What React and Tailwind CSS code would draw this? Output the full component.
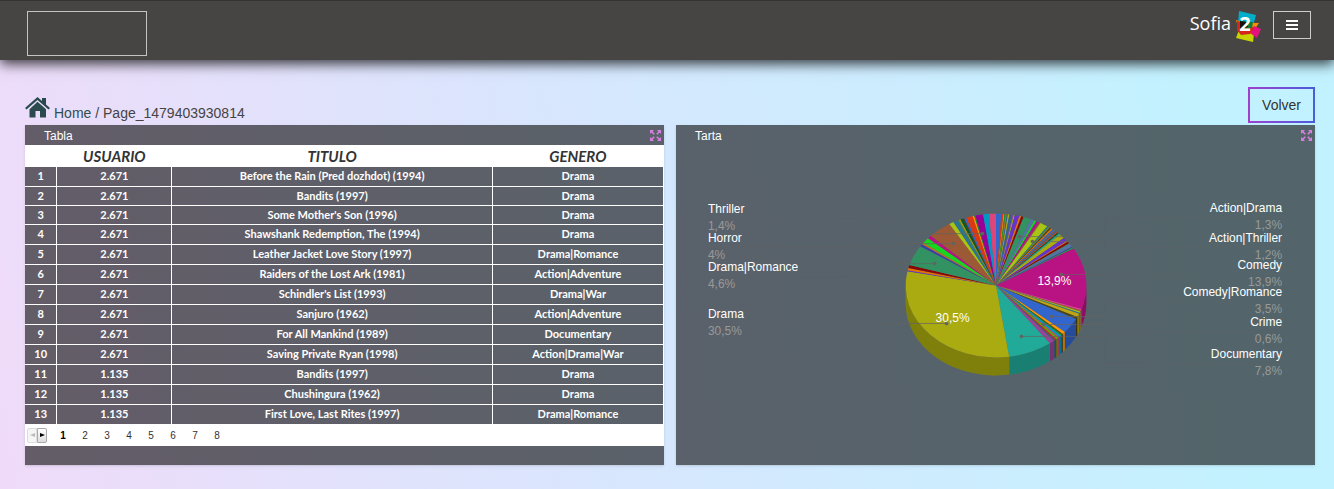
import React from "react";

const ROWS = [
  ["2.671", "Before the Rain (Pred dozhdot) (1994)", "Drama"],
  ["2.671", "Bandits (1997)", "Drama"],
  ["2.671", "Some Mother's Son (1996)", "Drama"],
  ["2.671", "Shawshank Redemption, The (1994)", "Drama"],
  ["2.671", "Leather Jacket Love Story (1997)", "Drama|Romance"],
  ["2.671", "Raiders of the Lost Ark (1981)", "Action|Adventure"],
  ["2.671", "Schindler's List (1993)", "Drama|War"],
  ["2.671", "Sanjuro (1962)", "Action|Adventure"],
  ["2.671", "For All Mankind (1989)", "Documentary"],
  ["2.671", "Saving Private Ryan (1998)", "Action|Drama|War"],
  ["1.135", "Bandits (1997)", "Drama"],
  ["1.135", "Chushingura (1962)", "Drama"],
  ["1.135", "First Love, Last Rites (1997)", "Drama|Romance"],
];

// [end angle in degrees clockwise from the top, colour]
const SLICES = [
  [3.4, "#3366cc"], [4.8, "#dc3912"], [5.4, "#ff9900"], [6.2, "#109618"],
  [6.9, "#b77322"], [7.6, "#316395"], [8.6, "#aaaa11"], [10.6, "#316395"],
  [11.3, "#994499"], [12, "#aaaa11"], [15, "#6633cc"], [16.2, "#e67300"],
  [17.8, "#8b0707"], [22.8, "#329262"], [25.2, "#5574a6"], [26.6, "#16d620"],
  [26.9, "#3b3eac"], [28.8, "#b91383"], [29.5, "#9c5935"], [34.6, "#a9c413"],
  [35.6, "#2a778d"], [36.6, "#668d1c"], [37.6, "#5a3a10"], [38.7, "#e67300"],
  [39.9, "#3366cc"], [40.8, "#9c5935"], [41.8, "#316395"], [42.8, "#dc3912"],
  [43.8, "#0c5922"], [45, "#22aa99"], [48.6, "#aaaa11"], [51.6, "#6633cc"],
  [52.4, "#e67300"], [54, "#8b0707"], [54.6, "#329262"], [57.4, "#5574a6"],
  [58.1, "#3b3eac"], [59, "#16a040"], [109, "#b91383"], [110.2, "#f4359e"],
  [111.2, "#9c5935"], [112.2, "#a9c413"], [113.1, "#2a778d"], [116, "#bea413"],
  [117.8, "#4a4518"], [130.4, "#3366cc"], [132.3, "#ff9900"], [133.2, "#5a4a20"],
  [134, "#109618"], [135.8, "#0099c6"], [136.6, "#dd4477"], [138.2, "#66aa00"],
  [139.5, "#b82e2e"], [140.4, "#316395"], [143.5, "#994499"], [171.6, "#22aa99"],
  [281.4, "#aaaa11"], [282.3, "#6633cc"], [284.2, "#e67300"], [286.6, "#8b0707"],
  [303.2, "#329262"], [305, "#3b3eac"], [306.6, "#b77322"], [311.2, "#16d620"],
  [313.9, "#b91383"], [328.9, "#9c5935"], [331.9, "#a9c413"], [335.2, "#2a778d"],
  [336, "#668d1c"], [336.8, "#bea413"], [338.8, "#0c5922"], [339.5, "#743411"],
  [340.8, "#3366cc"], [345, "#dc3912"], [346, "#ff9900"], [346.8, "#109618"],
  [351.8, "#990099"], [355.5, "#0099c6"], [360, "#dd4477"],
];

const CX = 320.5, CY = 140.5, RX = 90.5, RY = 72, DEPTH = 18;

function rim(deg, dy = 0) {
  const a = (deg * Math.PI) / 180;
  return `${(CX + RX * Math.sin(a)).toFixed(2)} ${(CY + dy - RY * Math.cos(a)).toFixed(2)}`;
}

const WEDGES = SLICES.map(([end, color], i) => ({
  start: i === 0 ? 0 : SLICES[i - 1][0],
  end,
  color,
}));

const LABELS = [
  ["Thriller", "1,4%", 32, 68, "start"],
  ["Horror", "4%", 32, 97, "start"],
  ["Drama|Romance", "4,6%", 32, 126, "start"],
  ["Drama", "30,5%", 32, 173, "start"],
  ["Action|Drama", "1,3%", 607, 67, "end"],
  ["Action|Thriller", "1,2%", 607, 97, "end"],
  ["Comedy", "13,9%", 607, 124, "end"],
  ["Comedy|Romance", "3,5%", 607, 151, "end"],
  ["Crime", "0,6%", 607, 181, "end"],
  ["Documentary", "7,8%", 607, 213, "end"],
];

// [label edge x, label line y, dot x, dot y]
const LEADERS = [
  [32, 73, 307, 88],
  [32, 102, 278, 98],
  [32, 131, 259, 118],
  [32, 178, 271, 178],
  [607, 72, 344, 91],
  [607, 102, 357, 96],
  [607, 129, 386, 129],
  [607, 156, 376, 171],
  [607, 186, 368, 179],
  [607, 218, 346, 191],
];

function PieChart() {
  return (
    <svg
      viewBox="0 0 640 320"
      className="block h-80 w-full font-['Liberation_Sans',Arial,sans-serif] text-xs"
      role="img"
      aria-label="Tarta"
    >
      {WEDGES.filter((w) => w.end > 90 && w.start < 270).map((w) => {
        const s = Math.max(w.start, 90);
        const e = Math.min(w.end, 270);
        const d = `M${rim(s)}A${RX} ${RY} 0 0 1 ${rim(e)}L${rim(e, DEPTH)}A${RX} ${RY} 0 0 0 ${rim(s, DEPTH)}Z`;
        return (
          <g key={w.start}>
            <path d={d} fill={w.color} />
            <path d={d} fill="#000" fillOpacity="0.25" />
          </g>
        );
      })}
      {WEDGES.map((w) => (
        <path
          key={w.start}
          d={`M${CX} ${CY}L${rim(w.start)}A${RX} ${RY} 0 0 1 ${rim(w.end)}Z`}
          fill={w.color}
        />
      ))}
      <g fill="none" stroke="#636363">
        {LEADERS.map(([x, y, dx, dy]) => {
          const bend = x < CX ? 220 : 430;
          return (
            <g key={`${x}-${y}`}>
              <path d={`M${x} ${y + 0.5}H${bend}`} strokeOpacity="0.35" />
              <path d={`M${bend} ${y + 0.5}V${dy + 0.5}`} strokeOpacity="0.2" />
              <path d={`M${bend} ${dy + 0.5}H${dx}`} strokeOpacity="0.7" />
              <circle cx={dx} cy={dy + 0.5} r="1.5" fill="#636363" strokeOpacity="0.7" />
            </g>
          );
        })}
      </g>
      <g fill="#fff">
        <text x="260" y="177">30,5%</text>
        <text x="362" y="140">13,9%</text>
      </g>
      {LABELS.map(([name, pct, x, y, anchor]) => (
        <g key={name} textAnchor={anchor}>
          <text x={x} y={y} fill="#fff">{name}</text>
          <text x={x} y={y + 17} fill="#999">{pct}</text>
        </g>
      ))}
    </svg>
  );
}

function ExpandIcon() {
  return (
    <svg viewBox="0 0 11 11" className="size-[11px]" fill="#da7fe0" stroke="#da7fe0" aria-hidden="true">
      <path stroke="none" d="M0 0h4L0 4zM11 0v4L7 0zM0 11V7l4 4zM11 11H7l4-4z" />
      <path strokeWidth="1.6" d="M1.5 1.5L4.2 4.2M9.5 1.5L6.8 4.2M1.5 9.5L4.2 6.800M9.5 9.5L6.8 6.8" />
    </svg>
  );
}

function Panel({ title, children }) {
  return (
    <section className="h-[340px] min-w-0 flex-1 bg-[#0e0e0e]/62 shadow-sm">
      <div className="flex h-5 items-center justify-between pr-[3px] pl-[19px]">
        <h2 className="pt-px text-xs text-white">{title}</h2>
        <button type="button" aria-label={`Ampliar ${title}`}>
          <ExpandIcon />
        </button>
      </div>
      {children}
    </section>
  );
}

function MovieTable() {
  return (
    <>
      <table className="w-full table-fixed border-collapse text-center font-[Lato,'Noto_Sans',sans-serif] text-[11px] leading-3 font-bold text-white">
        <colgroup>
          <col className="w-[5%]" />
          <col className="w-[18%]" />
          <col className="w-[50.2%]" />
          <col className="w-[26.8%]" />
        </colgroup>
        <thead className="bg-white text-[15px] leading-4 text-[#333] italic">
          <tr className="h-[22px]">
            <th aria-label="Fila" />
            <th className="p-0">USUARIO</th>
            <th className="p-0">TITULO</th>
            <th className="p-0">GENERO</th>
          </tr>
        </thead>
        <tbody>
          {ROWS.map((row, i) => (
            <tr key={i} className={i < 3 ? "h-[19px]" : "h-5"}>
              {[i + 1, ...row].map((cell, j) => (
                <td key={j} className="border-r border-b border-white p-0">{cell}</td>
              ))}
            </tr>
          ))}
        </tbody>
      </table>
      <nav aria-label="Paginación" className="flex h-[21px] items-center bg-white pl-[2px] text-[10px] text-[#333]">
        <button type="button" disabled aria-label="Anterior" className="flex h-[15px] w-[10px] items-center justify-center rounded-l-xs border border-[#ddd] bg-[#f5f5f5]">
          <svg viewBox="0 0 5 4" className="h-1 w-[5px]" fill="#bbb"><path d="M5 0v4L0 2z" /></svg>
        </button>
        <button type="button" aria-label="Siguiente" className="flex h-[15px] w-[10px] items-center justify-center rounded-r-xs border border-[#aaa] bg-linear-to-b from-white to-[#ddd]">
          <svg viewBox="0 0 5 4" className="h-1 w-[5px]" fill="#000"><path d="M0 0v4l5-2z" /></svg>
        </button>
        <div className="flex pl-[5px]">
          {[1, 2, 3, 4, 5, 6, 7, 8].map((n) => (
            <a key={n} href={`#${n}`} className={n === 1 ? "w-[22px] text-center font-bold text-black" : "w-[22px] text-center"}>{n}</a>
          ))}
        </div>
      </nav>
    </>
  );
}

function Logo() {
  return (
    <div className="flex items-start">
      <span className="font-['Open_Sans','Noto_Sans',sans-serif] text-lg leading-6 text-white">Sofia</span>
      <svg viewBox="0 0 26 32" className="ml-1 h-8 w-[26px]" aria-label="2">
        <path fill="#00aecb" d="M4 0l17 4-3 11L3 13z" />
        <path fill="#c8d400" d="M4 19l13 3 2 1-1 8-17-4z" />
        <path fill="#f39200" d="M1 9l10 3 13 0-7 10-12 1z" />
        <path fill="#e5127d" d="M19 15l7 3-4 9-7-5z" />
        <path fill="#d4261c" d="M2 10l9 2 8 5-4 6-9 1-4-5z" />
        <path fill="#107a38" d="M5 10l13 1-1 6-9 1z" />
        <path fill="#1c0f08" d="M5 10l6 1 2 5-8 2z" />
        <text x="10" y="20" textAnchor="middle" fill="#fff" className="font-['Noto_Sans','Open_Sans',sans-serif] text-xl font-bold">2</text>
      </svg>
    </div>
  );
}

export default function App() {
  return (
    <div className="min-h-screen bg-linear-80 from-[#efdbf9] via-[#d4e8fe] to-[#c2f2ff] to-90% font-['Liberation_Sans',Arial,sans-serif]">
      <header className="flex h-[60px] items-start justify-between border-t border-[#333] bg-[#474543] pt-[10px] pr-[23px] pl-[27px] shadow-[0_4px_12px_rgba(0,0,0,0.75)]">
        <div className="h-[45px] w-[120px] border border-[#c4c4c4]" />
        <div className="flex items-start gap-3">
          <Logo />
          <button type="button" aria-label="Menú" className="flex h-7 w-[38px] flex-col items-center justify-center gap-[2px] border border-[#ccc]">
            <span className="h-[2px] w-3 bg-white" />
            <span className="h-[2px] w-3 bg-white" />
            <span className="h-[2px] w-3 bg-white" />
          </button>
        </div>
      </header>
      <main className="pt-[27px] pr-[19px] pb-6 pl-[25px]">
        <div className="flex h-[38px] items-start justify-between">
          <nav aria-label="Ruta" className="flex items-end pt-[10px] text-sm leading-4 text-[#444]">
            <a href="#home" className="flex items-end gap-1 text-[#2f4f4f]">
              <svg viewBox="0 0 25 21" className="mb-[3px] h-[21px] w-[25px]" fill="#2a4a4d" aria-hidden="true">
                <path d="M12.5 0L17 4V1h4v6.400l4 3.600-1.500 1.600L12.500 2.900 1.500 12.600 0 11z" />
                <path d="M12.500 4.800L21 12.300V20.500H15V14h-4.500v6.500H4.500V12.300z" />
              </svg>
              <span>Home</span>
            </a>
            <span className="whitespace-pre"> / Page_1479403930814</span>
          </nav>
          <button type="button" className="h-9 border-2 px-3 text-sm text-[#333] [border-image:linear-gradient(to_right,#a03fce,#4a5cdc)_1]">
            Volver
          </button>
        </div>
        <div className="flex gap-3">
          <Panel title="Tabla"><MovieTable /></Panel>
          <Panel title="Tarta"><PieChart /></Panel>
        </div>
      </main>
    </div>
  );
}
